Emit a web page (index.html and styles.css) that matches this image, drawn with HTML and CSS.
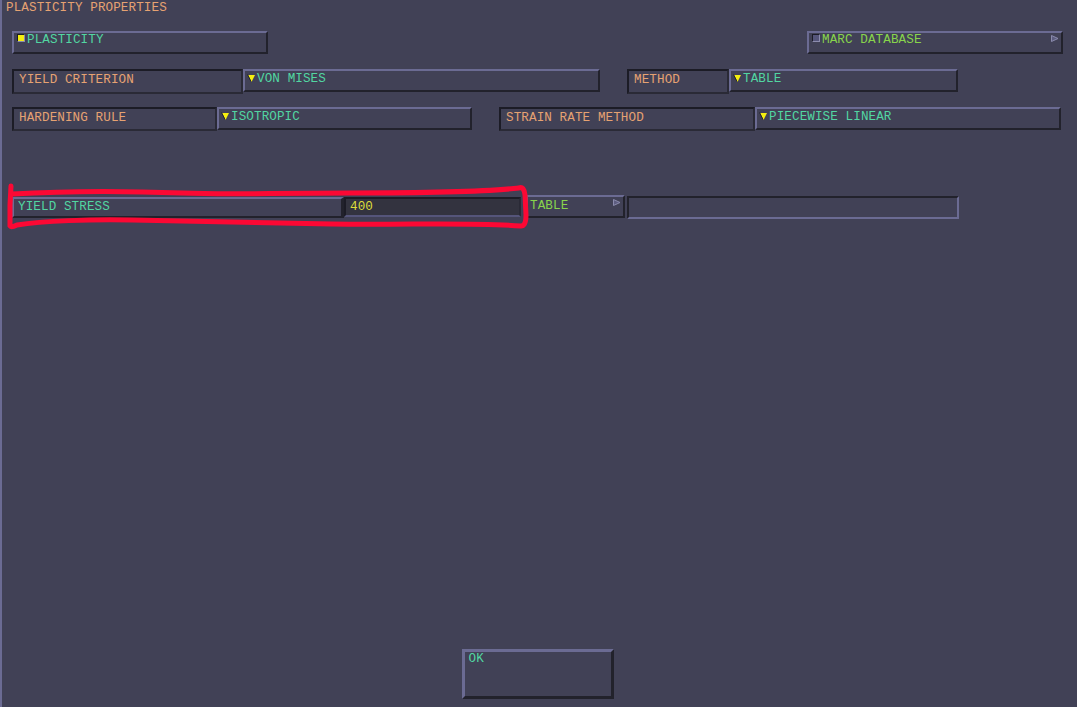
FILE: index.html
```html
<!DOCTYPE html>
<html lang="en">
<head>
  <meta charset="UTF-8">
  <meta name="viewport" content="width=device-width,initial-scale=1">
  <title>Plasticity Properties</title>
  <link rel="stylesheet" href="styles.css">
</head>
<body>

  <div class="window">
    <div class="title">PLASTICITY PROPERTIES</div>

    <div class="row row-top">
      <div class="btn toggle w-plast"><span class="check on"></span>PLASTICITY</div>
      <div class="btn toggle alt w-marc">
        <span class="check"></span>MARC DATABASE
        <svg class="flag" width="8" height="7" viewBox="0 0 8 7"><path d="M0.5 0.5 L7 3.5 L0.5 6.5 Z" fill="#5d5d80" stroke="#8a8aac" stroke-width="1"/></svg>
      </div>
    </div>

    <div class="row row-crit">
      <div class="label w-crit">YIELD CRITERION</div>
      <div class="btn menu w-vm"><svg class="arrow" width="8" height="8" viewBox="0 0 8 8"><path d="M1 1 H8 L4.5 8 Z" fill="#f4ee10"/><path d="M0.5 0.5 L4 7.5" stroke="#25252f" stroke-width="1"/></svg>VON MISES</div>
      <div class="label w-meth gap">METHOD</div>
      <div class="btn menu w-tab"><svg class="arrow" width="8" height="8" viewBox="0 0 8 8"><path d="M1 1 H8 L4.5 8 Z" fill="#f4ee10"/><path d="M0.5 0.5 L4 7.5" stroke="#25252f" stroke-width="1"/></svg>TABLE</div>
    </div>

    <div class="row row-hard">
      <div class="label w-hard">HARDENING RULE</div>
      <div class="btn menu w-iso"><svg class="arrow" width="8" height="8" viewBox="0 0 8 8"><path d="M1 1 H8 L4.5 8 Z" fill="#f4ee10"/><path d="M0.5 0.5 L4 7.5" stroke="#25252f" stroke-width="1"/></svg>ISOTROPIC</div>
      <div class="label w-rate gap">STRAIN RATE METHOD</div>
      <div class="btn menu w-pw"><svg class="arrow" width="8" height="8" viewBox="0 0 8 8"><path d="M1 1 H8 L4.5 8 Z" fill="#f4ee10"/><path d="M0.5 0.5 L4 7.5" stroke="#25252f" stroke-width="1"/></svg>PIECEWISE LINEAR</div>
    </div>

    <div class="row row-yield">
      <div class="btn w-ys">YIELD STRESS</div>
      <div class="field value w-val">400</div>
      <div class="btn alt w-tbl">
        TABLE
        <svg class="flag" width="8" height="7" viewBox="0 0 8 7"><path d="M0.5 0.5 L7 3.5 L0.5 6.5 Z" fill="#5d5d80" stroke="#8a8aac" stroke-width="1"/></svg>
      </div>
      <div class="field w-extra"></div>
    </div>

    <div class="footer">
      <div class="btn ok">OK</div>
    </div>

    <!-- hand drawn highlight round the yield stress row -->
    <svg class="markup" width="1077" height="707" viewBox="0 0 1077 707">
      <path d="M9 186 L8 205 L8 226 Q9 228 15 225 C40 221 90 219 130 220 S250 223 330 224 S470 222 519 226 Q524 226 524 215 L523 195 Q522 186 517 188 C490 191 440 193 350 193 S230 195 180 193 S60 191 10 194"
        fill="none" stroke="#fc0834" stroke-width="5" stroke-linecap="round" stroke-linejoin="round"/>
    </svg>
  </div>

</body>
</html>
```

FILE: styles.css
```css
:root {
  --bg:      #414156;
  --light:   #6b6b93;
  --dark:    #22222c;
  --sunk:    #33333f;
  --orange:  #e6a272;
  --green:   #52d6a2;
  --lime:    #88d44c;
  --yellow:  #dede3a;
}
*, *::before, *::after { box-sizing: border-box; }
body {
  margin: 0;
  background: var(--bg);
  font-family: 'Liberation Mono', 'DejaVu Sans Mono', monospace;
  font-size: 12.6px;
  line-height: 12px;
  letter-spacing: .1px;
  color: var(--green);
}
.window {
  position: relative;
  width: 1077px;
  height: 707px;
  display: flex;
  flex-direction: column;
  padding: 0 14px 8px 10px;
  border-left: 2px solid var(--light);
  background: var(--bg);
  overflow: hidden;
}
.title {
  margin: 2px 0 0 -6px;
  color: var(--orange);
}

/* rows of widgets */
.row { display: flex; align-items: flex-start; }
.row-top  { margin-top: 17px; justify-content: space-between; }
.row-crit { margin-top: 15px; }
.row-hard { margin-top: 13px; }
.row-yield { margin-top: 64px; }
.gap { margin-left: 27px; }

/* raised button */
.btn {
  position: relative;
  display: flex;
  align-items: flex-start;
  height: 23px;
  padding: 1px 4px 0;
  border: 2px solid;
  border-color: var(--light) var(--dark) var(--dark) var(--light);
  white-space: nowrap;
}
.btn.alt { color: var(--lime); }
.toggle { padding: 1px 3px 0; }

/* sunken label */
.label {
  height: 25px;
  padding: 3px 5px 0;
  border: 2px solid;
  border-color: #1c1c26 #2a2a36 #2a2a36 #1c1c26;
  color: var(--orange);
  white-space: nowrap;
}
.row-hard .label { height: 24px; }

.check {
  width: 8px; height: 8px;
  margin: 0 2px 0 0;
  border: 1px solid;
  border-color: #1c1c26 #8c8cae #8c8cae #1c1c26;
  background: #55557a;
}
.check.on { background: #f4ee10; }

.menu { padding: 2px 2px 0; }
.arrow { margin: 1px 2px 0 0; flex: none; }

.flag {
  position: absolute;
  top: 2px; right: 2px;
}

/* entry fields */
.field {
  height: 23px;
  border: 2px solid;
  border-color: var(--dark) var(--light) var(--light) var(--dark);
}
.value {
  height: 20px;
  margin-top: 2px;
  padding: 2px 4px 0;
  background: var(--sunk);
  border-color: #1c1c26 #2a2a36 #55557a #1c1c26;
  color: var(--yellow);
}

/* widths */
.w-plast { width: 256px; }
.w-marc  { width: 256px; }
.w-crit  { width: 231px; }
.w-vm    { width: 357px; }
.w-meth  { width: 102px; }
.w-tab   { width: 229px; }
.w-hard  { width: 205px; }
.w-iso   { width: 255px; }
.w-rate  { width: 256px; }
.w-pw    { width: 306px; }
.w-ys    { width: 332px; height: 21px; margin-top: 2px; padding: 2px 4px 0; border-right-width: 3px; }
.w-val   { width: 177px; }
.w-tbl   { width: 99px; margin-left: 5px; padding: 3px 2px 0; }
.w-extra { width: 332px; margin: 1px 0 0 2px; }

.footer {
  margin-top: auto;
  display: flex;
  justify-content: center;
}
.ok {
  width: 152px;
  height: 50px;
  padding: 1px 4px 0;
  border-width: 3px;
}

.markup {
  position: absolute;
  left: 0; top: 0;
  pointer-events: none;
}
```
